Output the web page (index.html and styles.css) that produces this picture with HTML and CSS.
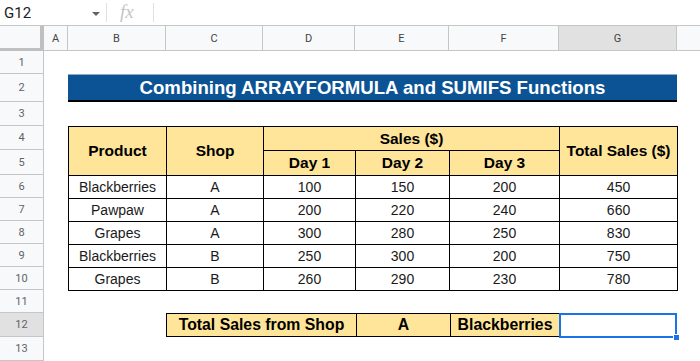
FILE: index.html
```html
<!DOCTYPE html>
<html lang="en">
<head>
    <meta charset="UTF-8">
    <meta name="viewport" content="width=device-width, initial-scale=1.0">
    <title>Combining ARRAYFORMULA and SUMIFS Functions</title>
    <link rel="stylesheet" href="styles.css">
</head>
<body>
    <div class="formula-bar">
        <div class="name-box">
            <span class="cell-ref">G12</span>
            <span class="caret"></span>
        </div>
        <div class="divider"></div>
        <div class="fx">fx</div>
        <div class="divider"></div>
    </div>

    <div class="col-heads">
        <div class="corner"></div>
        <div class="col-head col-a">A</div>
        <div class="col-head col-b">B</div>
        <div class="col-head col-c">C</div>
        <div class="col-head col-d">D</div>
        <div class="col-head col-e">E</div>
        <div class="col-head col-f">F</div>
        <div class="col-head col-g active">G</div>
        <div class="col-head col-h"></div>
    </div>

    <div class="sheet-body">
        <div class="row-heads">
            <div class="row-head h23">1</div>
            <div class="row-head h28">2</div>
            <div class="row-head h24">3</div>
            <div class="row-head h24">4</div>
            <div class="row-head h25">5</div>
            <div class="row-head h23">6</div>
            <div class="row-head h23">7</div>
            <div class="row-head h23">8</div>
            <div class="row-head h23">9</div>
            <div class="row-head h23">10</div>
            <div class="row-head h23">11</div>
            <div class="row-head h24 active">12</div>
            <div class="row-head h24">13</div>
        </div>

        <div class="cells">
            <div class="title">Combining ARRAYFORMULA and SUMIFS Functions</div>

            <table class="sales">
                <colgroup>
                    <col class="w-b">
                    <col class="w-c">
                    <col class="w-d">
                    <col class="w-e">
                    <col class="w-f">
                    <col class="w-g">
                </colgroup>
                <thead>
                    <tr class="head-top">
                        <th rowspan="2">Product</th>
                        <th rowspan="2">Shop</th>
                        <th colspan="3">Sales ($)</th>
                        <th rowspan="2">Total Sales ($)</th>
                    </tr>
                    <tr class="head-sub">
                        <th>Day 1</th>
                        <th>Day 2</th>
                        <th>Day 3</th>
                    </tr>
                </thead>
                <tbody>
                    <tr><td>Blackberries</td><td>A</td><td>100</td><td>150</td><td>200</td><td>450</td></tr>
                    <tr><td>Pawpaw</td><td>A</td><td>200</td><td>220</td><td>240</td><td>660</td></tr>
                    <tr><td>Grapes</td><td>A</td><td>300</td><td>280</td><td>250</td><td>830</td></tr>
                    <tr><td>Blackberries</td><td>B</td><td>250</td><td>300</td><td>200</td><td>750</td></tr>
                    <tr><td>Grapes</td><td>B</td><td>260</td><td>290</td><td>230</td><td>780</td></tr>
                </tbody>
            </table>

            <div class="criteria">
                <div class="crit-cell">Total Sales from Shop</div>
                <div class="crit-cell">A</div>
                <div class="crit-cell">Blackberries</div>
            </div>

            <div class="selected">
                <span class="fill-handle"></span>
            </div>
        </div>
    </div>
</body>
</html>
```

FILE: styles.css
```css
* {
    box-sizing: border-box;
}
body {
    margin: 0;
    width: 700px;
    height: 361px;
    overflow: hidden;
    background: #fff;
    font-family: "Liberation Sans", Arial, sans-serif;
}

/* formula bar */
.formula-bar {
    display: flex;
    align-items: center;
    height: 25px;
    background: #fff;
}
.name-box {
    display: flex;
    align-items: center;
    justify-content: space-between;
    width: 106px;
    padding: 0 6px 0 4px;
}
.cell-ref {
    font-family: Roboto, sans-serif;
    font-size: 15px;
    color: #202124;
}
.caret {
    width: 0;
    height: 0;
    border-left: 4px solid transparent;
    border-right: 4px solid transparent;
    border-top: 4px solid #5f6368;
    margin-top: 2px;
}
.divider {
    width: 1px;
    height: 19px;
    background: #e0e0e0;
}
.fx {
    width: 46px;
    padding-left: 13px;
    font-family: "Liberation Serif", serif;
    font-style: italic;
    font-size: 19px;
    color: #c4c4c4;
    margin-top: -2px;
}

/* column headers */
.col-heads {
    display: flex;
    height: 26px;
    background: #f8f9fa;
    border-top: 1px solid #c4c7c5;
    border-bottom: 1px solid #c4c7c5;
}
.corner {
    width: 44px;
    border-right: 4px solid #c0c0c0;
    border-bottom: 3px solid #c0c0c0;
    margin-bottom: -1px;
}
.col-head {
    display: flex;
    align-items: center;
    justify-content: center;
    border-right: 1px solid #c4c7c5;
    font-family: Roboto, sans-serif;
    font-size: 11px;
    color: #444;
}
.col-head.active {
    background: #e1e1e1;
}
.col-a { width: 24px; }
.col-b { width: 98px; }
.col-c { width: 97px; }
.col-d { width: 92px; }
.col-e { width: 94px; }
.col-f { width: 110px; }
.col-g { width: 118px; }
.col-h { flex: 1; border-right: none; }

/* body */
.sheet-body {
    display: flex;
}
.row-heads {
    width: 44px;
    display: flex;
    flex-direction: column;
    background: #f8f9fa;
    border-right: 1px solid #c4c7c5;
}
.row-head {
    display: flex;
    align-items: center;
    justify-content: center;
    border-bottom: 1px solid #c4c7c5;
    font-family: Roboto, sans-serif;
    font-size: 11px;
    color: #5f6368;
}
.row-head.active {
    background: #e1e1e1;
}
.h23 { height: 23px; }
.h24 { height: 24px; }
.h25 { height: 25px; }
.h28 { height: 28px; }

.cells {
    flex: 1;
    display: grid;
    grid-template-columns: 24px 98px 97px 92px 94px 110px 118px 1fr;
    grid-template-rows: 23px 28px 24px 24px 25px 23px 23px 23px 23px 23px 23px 24px 24px;
}

.title {
    grid-column: 2 / 8;
    grid-row: 2;
    display: flex;
    align-items: center;
    justify-content: center;
    background: #0b5394;
    border-top: 1px solid #8fa9c8;
    border-bottom: 2px solid #000;
    color: #fff;
    font-weight: bold;
    font-size: 18.6px;
    padding-top: 1px;
}

/* data table */
.sales {
    grid-column: 2 / 8;
    grid-row: 4 / 11;
    width: 609px;
    height: 164px;
    table-layout: fixed;
    border-collapse: collapse;
    border: 1px solid #000;
}
.w-b { width: 98px; }
.w-c { width: 97px; }
.w-d { width: 92px; }
.w-e { width: 94px; }
.w-f { width: 110px; }
.w-g { width: 118px; }
.sales th,
.sales td {
    border: 1px solid #000;
    padding: 0;
    text-align: center;
    white-space: nowrap;
}
.sales th {
    background: #ffe599;
    font-size: 15.5px;
    font-weight: bold;
    color: #000;
}
.sales td {
    font-size: 14px;
    color: #1a1a1a;
    height: 23px;
}
.head-top { height: 24px; }
.head-sub { height: 25px; }

/* criteria row */
.criteria {
    grid-column: 3 / 7;
    grid-row: 12;
    display: grid;
    grid-template-columns: 189px 94px 1fr;
    border: 1px solid #000;
    background: #ffe599;
    margin-right: -1px;
}
.crit-cell {
    display: flex;
    align-items: center;
    justify-content: center;
    border-left: 1px solid #000;
    font-size: 15.8px;
    font-weight: bold;
    color: #000;
}
.crit-cell:first-child {
    border-left: none;
}

.selected {
    grid-column: 7;
    grid-row: 12;
    position: relative;
    border: 2px solid #1a73e8;
    margin-bottom: -1px;
}
.fill-handle {
    position: absolute;
    right: -5px;
    bottom: -5px;
    width: 7px;
    height: 7px;
    background: #1a73e8;
    border: 1px solid #fff;
}
```
